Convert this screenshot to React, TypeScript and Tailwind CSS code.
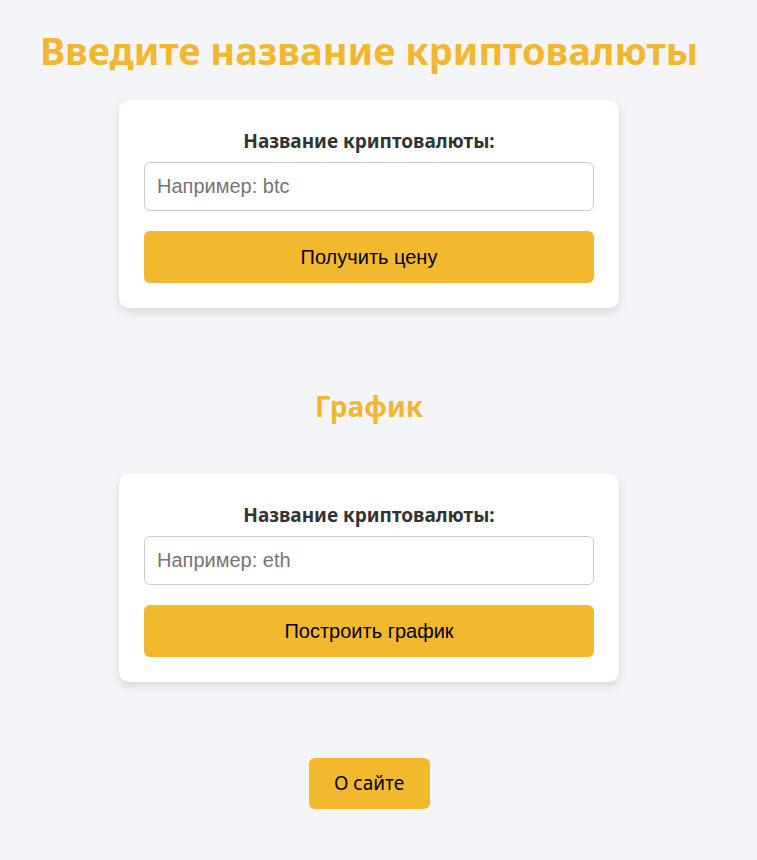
import React, { useState } from "react";

function CoinCard({ placeholder, action }: { placeholder: string; action: string }) {
  const [value, setValue] = useState("");
  return (
    <div className="w-[500px] bg-white rounded-[10px] shadow-[0_4px_10px_rgba(0,0,0,0.12)] px-[25px] pt-[28px] pb-[25px] flex flex-col items-center">
      <label className="text-[19px] leading-[27px] font-bold text-[#333] font-['Noto_Sans',sans-serif]">
        Название криптовалюты:
      </label>
      <input
        value={value}
        onChange={(e) => setValue(e.target.value)}
        placeholder={placeholder}
        className="mt-[7px] w-full h-[49px] px-[12px] border border-[#ccc] rounded-[6px] text-[20px] font-['Liberation_Sans',Arial,sans-serif] placeholder:text-[#757575] outline-none"
      />
      <button className="mt-[20px] w-full h-[52px] bg-[#f3b92e] rounded-[6px] text-[20px] text-black font-['Liberation_Sans',Arial,sans-serif]">
        {action}
      </button>
    </div>
  );
}

export default function App() {
  return (
    <div className="min-h-[860px] bg-[#f4f5f9] font-['Noto_Sans',sans-serif]">
      <div className="w-[738px] flex flex-col items-center">
        <h1 className="mt-[23px] text-[38px] leading-[54px] font-bold text-[#f3b72f] whitespace-nowrap">
          Введите название криптовалюты
        </h1>
        <div className="mt-[23px]">
          <CoinCard placeholder="Например: btc" action="Получить цену" />
        </div>
        <h2 className="mt-[78px] text-[28px] leading-[40px] font-bold text-[#f3b72f]">График</h2>
        <div className="mt-[48px]">
          <CoinCard placeholder="Например: eth" action="Построить график" />
        </div>
        <button className="mt-[76px] w-[121px] h-[51px] bg-[#f3b92e] rounded-[6px] text-[19px] text-black">
          О сайте
        </button>
      </div>
    </div>
  );
}
